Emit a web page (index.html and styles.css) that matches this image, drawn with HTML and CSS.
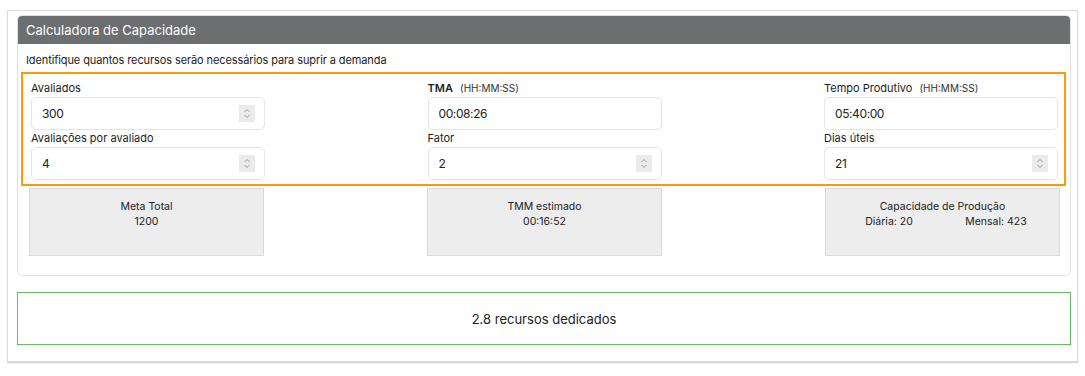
FILE: index.html
```html
<!DOCTYPE html>
<html lang="pt-br">
<head>
    <meta charset="UTF-8">
    <meta name="viewport" content="width=device-width, initial-scale=1.0">
    <title>Calculadora de Capacidade</title>
    <link rel="stylesheet" href="styles.css">
</head>
<body>
    <div class="page">
        <div class="card">
            <div class="card-header">Calculadora de Capacidade</div>
            <div class="card-body">
                <p class="subtitle">Identifique quantos recursos serão necessários para suprir a demanda</p>

                <div class="inputs">
                    <div class="col">
                        <label>Avaliados</label>
                        <div class="input-wrap">
                            <input type="text" value="300">
                            <span class="spin"><svg viewBox="0 0 16 17"><path d="M5.5 7 8 4.5 10.5 7M5.5 10 8 12.5 10.5 10"/></svg></span>
                        </div>
                        <label>Avaliações por avaliado</label>
                        <div class="input-wrap">
                            <input type="text" value="4">
                            <span class="spin"><svg viewBox="0 0 16 17"><path d="M5.5 7 8 4.5 10.5 7M5.5 10 8 12.5 10.5 10"/></svg></span>
                        </div>
                    </div>
                    <div class="col">
                        <label><b>TMA</b> <small>(HH:MM:SS)</small></label>
                        <div class="input-wrap">
                            <input type="text" value="00:08:26">
                        </div>
                        <label>Fator</label>
                        <div class="input-wrap">
                            <input type="text" value="2">
                            <span class="spin"><svg viewBox="0 0 16 17"><path d="M5.5 7 8 4.5 10.5 7M5.5 10 8 12.5 10.5 10"/></svg></span>
                        </div>
                    </div>
                    <div class="col">
                        <label>Tempo Produtivo <small>(HH:MM:SS)</small></label>
                        <div class="input-wrap">
                            <input type="text" value="05:40:00">
                        </div>
                        <label>Dias úteis</label>
                        <div class="input-wrap">
                            <input type="text" value="21">
                            <span class="spin"><svg viewBox="0 0 16 17"><path d="M5.5 7 8 4.5 10.5 7M5.5 10 8 12.5 10.5 10"/></svg></span>
                        </div>
                    </div>
                </div>

                <div class="results">
                    <div class="result">
                        <div>Meta Total</div>
                        <div>1200</div>
                    </div>
                    <div class="result">
                        <div>TMM estimado</div>
                        <div>00:16:52</div>
                    </div>
                    <div class="result">
                        <div>Capacidade de Produção</div>
                        <div class="split">
                            <span>Diária: 20</span>
                            <span>Mensal: 423</span>
                        </div>
                    </div>
                </div>
            </div>
        </div>

        <div class="total">2.8 recursos dedicados</div>
    </div>
</body>
</html>
```

FILE: styles.css
```css
body {
    margin: 0;
    padding: 0;
    font-family: Inter, "Noto Sans", sans-serif;
    color: #222;
}
.page {
    margin: 10px 7px;
    border: 1px solid #dcdcdc;
    box-shadow: 0 1px 1px #d4d4d4;
    padding: 4px 6px 16px 9px;
}
.card {
    border: 1px solid #e0e0e0;
    border-radius: 5px;
    overflow: hidden;
}
.card-header {
    background: #6c6e70;
    color: #fff;
    font-size: 13px;
    line-height: 28px;
    padding: 0 8px;
}
.card-body {
    padding: 8px 4px 19px 3px;
}
.subtitle {
    margin: 0 0 4px 5px;
    font-size: 11px;
    letter-spacing: -0.1px;
    line-height: 16px;
}
.inputs {
    border: 2px solid #ff9900;
    padding: 7px 6px 4px 8px;
    display: flex;
    justify-content: space-between;
}
.col {
    width: 234px;
}
.col label {
    display: block;
    font-size: 11px;
    line-height: 14px;
    margin-bottom: 2px;
}
.col label b {
    font-weight: 600;
}
.col label small {
    font-size: 10px;
    color: #333;
    margin-left: 4px;
}
.input-wrap {
    position: relative;
    margin-bottom: 1px;
}
.input-wrap:last-child {
    margin-bottom: 0;
}
.input-wrap input {
    display: block;
    width: 100%;
    height: 33px;
    box-sizing: border-box;
    border: 1px solid #e4e4e4;
    border-radius: 5px;
    padding: 0 10px;
    font-family: inherit;
    font-size: 12px;
    letter-spacing: -0.4px;
    color: #222;
    background: #fff;
}
.spin {
    position: absolute;
    right: 10px;
    top: 8px;
    width: 16px;
    height: 17px;
    background: #ebebeb;
}
.spin svg {
    display: block;
    width: 16px;
    height: 17px;
    fill: none;
    stroke: #9a9a9a;
    stroke-width: 1;
}
.results {
    margin-top: 2px;
    padding: 0 6px 0 8px;
    display: flex;
    justify-content: space-between;
}
.result {
    width: 235px;
    height: 68px;
    box-sizing: border-box;
    background: #ededed;
    border: 1px solid #dadada;
    padding-top: 10px;
    text-align: center;
    font-size: 10.5px;
    line-height: 15px;
}
.split {
    display: flex;
    width: 214px;
    margin: 0 auto;
}
.split span {
    flex: 1;
}
.total {
    margin-top: 16px;
    border: 1px solid #6ab86a;
    height: 53px;
    box-sizing: border-box;
    display: flex;
    align-items: center;
    justify-content: center;
    font-size: 13px;
}
```
